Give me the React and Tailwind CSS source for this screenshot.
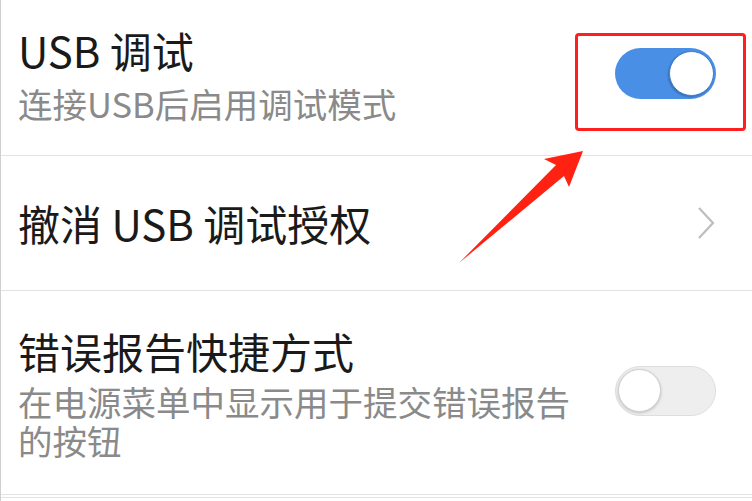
import React from 'react'

const font = { fontFamily: '"Noto Sans CJK SC", "Noto Sans", sans-serif' }

function Toggle({ on }) {
  if (on) {
    return (
      <div className="w-[101px] h-[51px] rounded-full bg-[#4a8fe6] flex items-center justify-end px-[2px] shrink-0">
        <div className="w-[45px] h-[45px] rounded-full bg-white border border-[#3f7fd0] shadow-[-1px_1px_2px_rgba(0,0,0,0.25)]" />
      </div>
    )
  }
  return (
    <div className="w-[101px] h-[50px] rounded-full bg-[#eeeeee] border border-[#dedede] flex items-center justify-start px-[2px] shrink-0">
      <div className="w-[43px] h-[43px] rounded-full bg-white border border-[#cfcfcf] shadow-[0_1px_3px_rgba(0,0,0,0.2)]" />
    </div>
  )
}

export default function App() {
  return (
    <div className="relative w-[752px] h-[501px] bg-white overflow-hidden border-l border-[#cfcfcf]" style={font}>
      {/* USB debugging */}
      <div className="flex items-center pl-[17px] pr-[36px] pt-[24px] pb-[32px] border-b border-[#e3e3e3]">
        <div className="flex-1 pr-[30px]">
          <div className="text-[42px] leading-[52px] text-[#1a1a1a]">USB 调试</div>
          <div className="mt-[7px] text-[34.5px] leading-[40px] text-[#8a8a8a]">连接USB后启用调试模式</div>
        </div>
        <Toggle on />
      </div>

      {/* Revoke authorizations */}
      <div className="flex items-center h-[135px] pl-[17px] pr-[36px] border-b border-[#e3e3e3]">
        <div className="flex-1 text-[42px] leading-[52px] text-[#1a1a1a]">撤消 USB 调试授权</div>
        <svg width="18" height="34" viewBox="0 0 18 34" className="shrink-0 mr-[1px]">
          <path d="M2 2 L16 17 L2 32" fill="none" stroke="#bdbdbd" strokeWidth="2.2" />
        </svg>
      </div>

      {/* Bug report shortcut */}
      <div className="flex items-center pl-[17px] pr-[36px] pt-[34px] pb-[34px] border-b border-[#e3e3e3]">
        <div className="flex-1 pr-[30px]">
          <div className="text-[42px] leading-[52px] text-[#1a1a1a]">错误报告快捷方式</div>
          <div className="mt-[5px] text-[34.5px] leading-[39px] text-[#8a8a8a]">在电源菜单中显示用于提交错误报告的按钮</div>
        </div>
        <div className="-mt-[4px]">
          <Toggle on={false} />
        </div>
      </div>
      <div className="h-[3px] border-b border-[#e3e3e3]" />

      {/* annotation overlay */}
      <div className="absolute left-[574px] top-[33px] w-[171px] h-[98px] border-[3px] border-[#ff1f1f] rounded-[4px] pointer-events-none" />
      <svg className="absolute left-0 top-0 pointer-events-none" width="752" height="501" viewBox="0 0 752 501">
        <polygon points="582,151 543,159 555,165 458,263 563,176 568,187" fill="#ff2212" />
      </svg>
    </div>
  )
}
